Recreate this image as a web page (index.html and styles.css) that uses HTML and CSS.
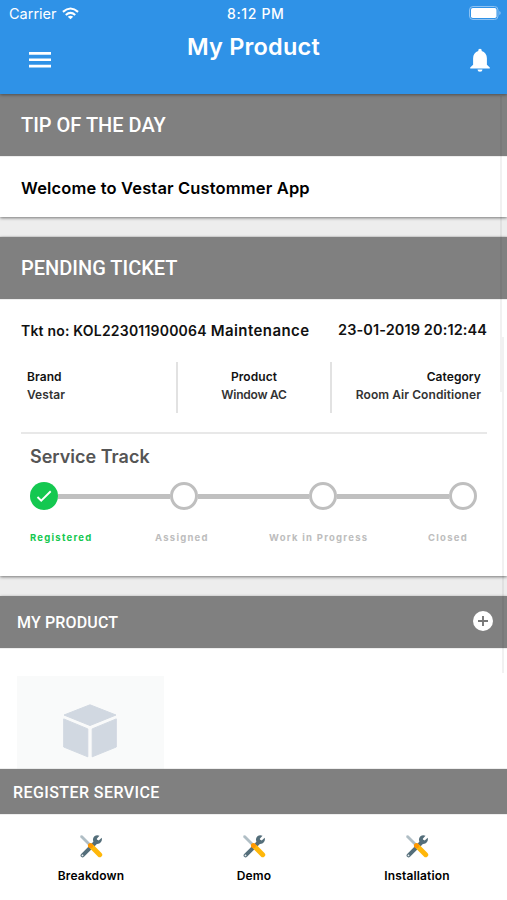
FILE: index.html
```html
<!DOCTYPE html>
<html lang="en">
<head>
<meta charset="utf-8">
<title>My Product</title>
<link rel="stylesheet" href="styles.css">
</head>
<body>
<svg class="defs" width="0" height="0" aria-hidden="true">
  <symbol id="tools" viewBox="0 0 24 24">
    <path d="M2 1.2 3.5 1.5 12 10 10 12 1.5 3.5 1.2 2Z" fill="#b0bec5"/>
    <path d="M3.6 21.4 17.5 7.5" stroke="#546e7a" stroke-width="4" stroke-linecap="round"/>
    <path d="M20.5 1.7 17.8 4.8 18.1 6.3 19.7 6.6 22.7 3.8C23.5 6.4 22 9.2 19.3 9.8 16.2 10.4 13.6 7.9 14 5 14.4 1.9 17.6.2 20.5 1.7Z" fill="#546e7a"/>
    <circle cx="3.5" cy="21.4" r=".9" fill="#eceff1"/>
    <path d="M12.8 12.8 20.7 20.7" stroke="#ffb70a" stroke-width="5" stroke-linecap="round"/>
    <circle cx="11.5" cy="11.5" r="2.6" fill="#ff9800"/>
  </symbol>
</svg>
<main class="app">
  <header class="header">
    <div class="status">
      <span class="carrier">Carrier</span>
      <svg class="wifi" viewBox="0 0 18 13" fill="none" stroke="#fff" stroke-width="2.2"><path d="M1 4.8Q9-2.3 17 4.8M4 8Q9 3.7 14 8"/><path d="M9 12.7 6.1 9.9Q9 7.8 11.9 9.9Z" fill="#fff" stroke="none"/></svg>
      <span class="clock">8:12 PM</span>
      <svg class="battery" viewBox="0 0 32 14"><rect x=".5" y=".5" width="28.5" height="13" rx="3.5" fill="none" stroke="#8dc2f2"/><rect x="2" y="2" width="25.5" height="10" rx="1.8" fill="#fff"/><path d="M30.3 5v4q1.4-.7 1.4-2t-1.4-2Z" fill="#8dc2f2"/></svg>
    </div>
    <div class="bar">
      <svg class="menu" viewBox="0 0 23 16" fill="#fff"><path d="M0 0h22v2.7H0zM0 6.4h22v2.7H0zM0 12.8h22v2.7H0z"/></svg>
      <h1 class="title">My Product</h1>
      <svg class="bell" viewBox="0 0 20 24" fill="#fff"><path d="M10 .7c-1.1 0-1.7.8-1.7 1.8v.6C5 4 3.1 6.8 3.1 10.3v6.5L.2 19.5v1h19.6v-1l-2.9-2.7v-6.5c0-3.5-1.9-6.3-5.2-7.2v-.6C11.7 1.5 11.1.7 10 .7ZM7.5 21.5a2.5 2.2 0 0 0 5 0Z"/></svg>
    </div>
  </header>

  <section class="card">
    <h2 class="head">TIP OF THE DAY</h2>
    <p class="tip">Welcome to Vestar Custommer App</p>
  </section>

  <section class="card">
    <h2 class="head pending">PENDING TICKET</h2>
    <div class="ticket">
      <div class="ticket-row"><span class="number">Tkt no: KOL223011900064</span> <span class="kind">Maintenance</span><time class="date">23-01-2019 20:12:44</time></div>
      <dl class="facts">
        <div class="fact"><dt>Brand</dt><dd>Vestar</dd></div>
        <div class="fact mid"><dt>Product</dt><dd class="window">Window AC</dd></div>
        <div class="fact end"><dt>Category</dt><dd>Room Air Conditioner</dd></div>
      </dl>
      <h3 class="track-title">Service Track</h3>
      <div class="track">
        <span class="step done"><svg viewBox="0 0 28 28" fill="none" stroke="#fff" stroke-width="1.9"><path d="m7.5 15 3.7 3.7L20.7 9.3"/></svg></span>
        <i class="link"></i><span class="step"></span>
        <i class="link"></i><span class="step"></span>
        <i class="link"></i><span class="step"></span>
      </div>
      <div class="labels"><span class="active">Registered</span><span>Assigned</span><span>Work in Progress</span><span>Closed</span></div>
    </div>
  </section>

  <section class="card products">
    <div class="head small"><h2 class="myproduct">MY PRODUCT</h2>
      <svg class="plus" viewBox="0 0 20 20"><circle cx="10" cy="10" r="10" fill="#fff"/><path d="M10 5v10M5 10h10" stroke="#777" stroke-width="1.9"/></svg>
    </div>
    <div class="product-body">
      <div class="thumb">
        <svg class="cube" viewBox="0 0 54 54" fill="#d1d8e1" stroke="#d1d8e1" stroke-width="1" stroke-linejoin="round"><path d="M27 .8 53 11 27 21.5 1 11ZM.7 14.9 24.8 24.9V52.8L.7 43ZM53.3 14.9 29.2 24.9V52.8L53.3 43Z"/></svg>
      </div>
    </div>
  </section>

  <section class="register">
    <h2 class="head foot">REGISTER SERVICE</h2>
    <nav class="services">
      <a class="service"><svg class="tool"><use href="#tools"/></svg><span>Breakdown</span></a>
      <a class="service"><svg class="tool"><use href="#tools"/></svg><span>Demo</span></a>
      <a class="service"><svg class="tool"><use href="#tools"/></svg><span>Installation</span></a>
    </nav>
  </section>
  <i class="scroll outer"></i>
  <i class="scroll inner"></i>
</main>
</body>
</html>
```
FILE: styles.css
```css
* { box-sizing: border-box; }
body { margin: 0; background: #ededed; font-family: Roboto, "Liberation Sans", sans-serif; font-weight: 500; color: #111; }
h1, h2, h3, p, dl, dd { margin: 0; font-weight: 500; }
.defs { position: absolute; }
svg { display: block; flex: none; }
.app { position: relative; width: 507px; height: 900px; overflow: hidden; display: flex; flex-direction: column; white-space: nowrap; }
.header { height: 94px; flex: none; background: #2f92e7; color: #fff; box-shadow: 0 1px 3px rgba(0,0,0,.4); z-index: 1; }
.status { height: 28px; display: grid; grid-template-columns: 53px 175px 1fr 32px; padding: 0 6px 0 9px; align-items: center; line-height: 28px; }
.carrier { font: 400 14.5px/28px Inter, sans-serif; }
.wifi { width: 17px; height: 13px; margin-top: -1px; }
.clock { font: 500 14px/28px Inter, sans-serif; letter-spacing: .65px; margin-left: -10px; }
.battery { width: 32px; height: 14px; margin-top: -2px; }
.bar { display: grid; grid-template-columns: 158px 1fr 20px; padding: 0 17px 0 29px; align-items: start; }
.menu { width: 23px; height: 16px; margin-top: 24px; }
.title, .tip, .ticket, .service { font-family: Inter, sans-serif; font-weight: 600; }
.ticket h3, .ticket dt, .ticket dd { font-weight: 600; }
.title { font-size: 23.5px; line-height: 38px; letter-spacing: .2px; }
.bell { width: 20px; height: 24px; margin-top: 20px; }
.card { flex: none; margin-bottom: 20px; background: #fff; box-shadow: 0 1px 3px rgba(0,0,0,.5); }
.head { height: 62px; background: #808080; color: #fff; padding-left: 21px; font-size: 20px; line-height: 62px; box-shadow: 0 0 1px #999; }
.tip { height: 61px; padding-left: 21px; font-size: 16.5px; line-height: 65px; letter-spacing: .15px; color: #000; }
.ticket { height: 277px; padding: 20px 20px 0 21px; }
.ticket-row { display: flex; font-size: 14.5px; line-height: 22px; }
.number { font-size: 14px; letter-spacing: .2px; padding-top: 1px; margin-bottom: -1px; }
.kind { margin-left: 4px; font-size: 15px; letter-spacing: .42px; padding-top: 1px; margin-bottom: -1px; }
.date { margin-left: auto; letter-spacing: .1px; }
.facts { height: 93px; padding-top: 21px; display: grid; grid-template-columns: 155px 155px 1fr; border-bottom: 2px solid #e8e8e8; font-size: 12px; line-height: 18px; letter-spacing: .07px; }
.fact { height: 51px; padding: 6px; }
.fact dd { color: #333; }
.window { letter-spacing: -.25px; }
.mid { text-align: center; border: solid #e2e2e2; border-width: 0 2px; margin-right: -1px; }
.end { text-align: right; }
.track-title { margin: 9px 0 0 9px; font-size: 18px; line-height: 28px; color: #555; }
.track { display: flex; align-items: center; margin: 11px 10px 0 9px; }
.step { width: 28px; height: 28px; flex: none; border: 3px solid #bfbfbf; border-radius: 50%; background: #fff; }
.done { background: #14c850; border: 0; }
.link { flex: 1; height: 5px; background: #c0c0c0; }
.labels { display: grid; grid-template-columns: 125px 114px 159px 1fr; padding: 20px 0 0 9px; font-size: 9.5px; font-weight: 700; line-height: 16px; color: #bdbdbd; letter-spacing: 1.25px; }
.active { color: #14c850; }
.products { height: 173px; margin: 0; overflow: hidden; }
.small { display: flex; justify-content: space-between; height: 52px; padding: 0 14px 0 17px; line-height: 53px; }
.small h2, .foot { font-size: 16px; }
.myproduct { letter-spacing: .15px; }
.plus { width: 20px; height: 20px; margin-top: 15px; }
.product-body { padding: 28px 17px 0; }
.thumb { width: 147px; height: 130px; background: #f9fafa; padding: 28px 0 0 46px; }
.cube { width: 54px; height: 54px; }
.register { height: 131px; background: #fff; z-index: 1; }
.foot { height: 45px; padding-left: 13px; line-height: 47px; letter-spacing: .42px; }
.services { height: 86px; display: grid; grid-template-columns: 154px 154px 154px; justify-content: center; column-gap: 9px; margin-left: 1px; }
.service { display: flex; flex-direction: column; align-items: center; padding-top: 20px; font-size: 12px; line-height: 18px; letter-spacing: .15px; color: #000; }
.tool { width: 24px; height: 24px; margin-bottom: 9px; }
.scroll { position: absolute; width: 2px; background: rgba(0,0,0,.055); z-index: 2; }
.outer { left: 500px; top: 96px; height: 296px; }
.inner { left: 502px; top: 337px; height: 336px; }
```
